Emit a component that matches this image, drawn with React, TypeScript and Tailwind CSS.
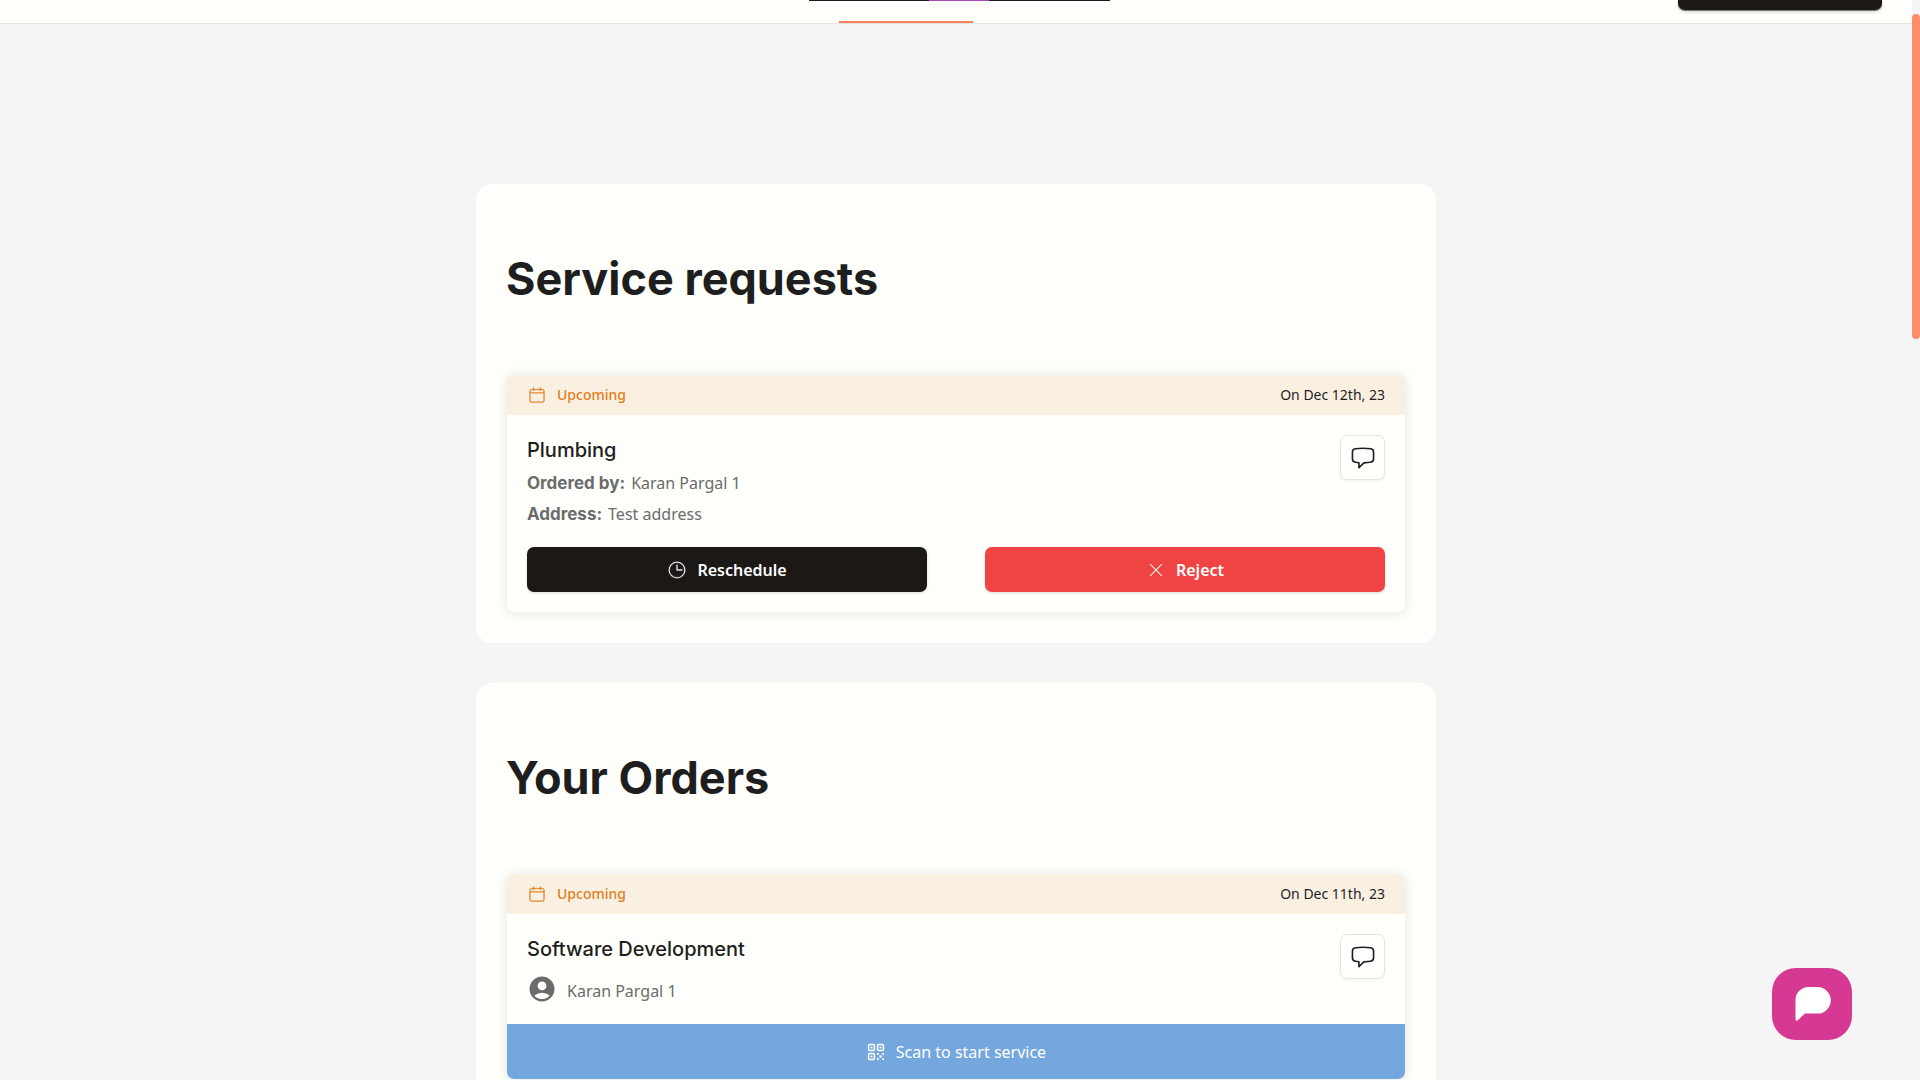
import type { ReactNode } from "react";
import { CiCalendar, CiClock2 } from "react-icons/ci";
import { HiOutlineChatBubbleLeft } from "react-icons/hi2";
import { MdAccountCircle } from "react-icons/md";
import { PiXLight } from "react-icons/pi";

function QrIcon() {
  return (
    <svg width="20" height="20" viewBox="0 0 20 20" fill="none" stroke="currentColor" aria-hidden="true">
      <g strokeWidth="1.5">
        <rect x="2.600" y="2.600" width="5.800" height="5.800" rx="1" />
        <rect x="11.600" y="2.600" width="5.800" height="5.800" rx="1" />
        <rect x="2.600" y="11.600" width="5.800" height="5.800" rx="1" />
      </g>
      <g fill="currentColor" stroke="none">
        <rect x="4.600" y="4.600" width="1.800" height="1.800" />
        <rect x="13.600" y="4.600" width="1.800" height="1.800" />
        <rect x="4.600" y="13.600" width="1.800" height="1.800" />
        <rect x="11" y="11" width="1.800" height="1.800" />
        <rect x="16.200" y="11" width="1.800" height="1.800" />
        <rect x="13.400" y="13.400" width="2.200" height="2.200" />
        <rect x="11" y="16.200" width="1.800" height="1.800" />
        <rect x="16.200" y="16.200" width="1.800" height="1.800" />
      </g>
    </svg>
  );
}

function TopBar() {
  return (
    <header className="grid h-6 grid-cols-[1fr_301px_1fr] border-b border-[#e4e4e2] bg-[#fffffb] pl-[7px]">
      <div />
      <nav aria-label="Main" className="flex flex-col justify-between">
        <div className="flex h-px bg-[#1e1e1e]">
          <span className="ml-[120px] w-[60px] bg-[#ab47bc]" />
        </div>
        <span className="ml-[30px] h-0.5 w-[134px] bg-[#fa7f5b]" />
      </nav>
      <div className="flex items-start justify-end pr-[30px]">
        <button
          type="button"
          aria-label="Account"
          className="h-[10px] w-[204px] rounded-b-[7px] bg-[#1c1815] shadow-[0_1px_1px_rgba(0,0,0,0.5),0_2px_4px_rgba(0,0,0,0.15)]"
        />
      </div>
    </header>
  );
}

function Section({ title, children }: { title: string; children: ReactNode }) {
  return (
    <section className="w-full max-w-[960px] rounded-2xl bg-[#fffffb] p-[30px]">
      <h1 className="pt-[31px] pb-[61px] font-['Inter',sans-serif] text-[45px] leading-[68px] font-bold text-[#1e1e1e]">
        {title}
      </h1>
      {children}
    </section>
  );
}

function OrderCard({ date, children }: { date: string; children: ReactNode }) {
  return (
    <article className="overflow-hidden rounded-lg border border-[#f3f3f1] bg-[#fffffb] shadow-[0_1px_12px_rgba(0,0,0,0.1)]">
      <div className="flex h-10 items-center justify-between bg-[#faf0e2] px-5 text-sm">
        <span className="flex items-center gap-[10px] font-medium text-[#e07f1b]">
          <CiCalendar size={20} strokeWidth={0.4} />
          Upcoming
        </span>
        <span className="text-[#1e1e1e]">{date}</span>
      </div>
      {children}
    </article>
  );
}

function ChatButton() {
  return (
    <button
      type="button"
      aria-label="Chat"
      className="flex size-[45px] shrink-0 items-center justify-center rounded-[7px] border border-[#e4e4e2] text-[#1e1e1e] shadow-[0_1px_3px_rgba(0,0,0,0.06)]"
    >
      <HiOutlineChatBubbleLeft size={26} />
    </button>
  );
}

function ServiceName({ children }: { children: ReactNode }) {
  return (
    <h2 className="font-['Inter',sans-serif] text-xl leading-[30px] font-medium text-[#1e1e1e]">{children}</h2>
  );
}

function Detail({ label, value }: { label: string; value: string }) {
  return (
    <p className="flex items-baseline gap-[6px] leading-[31px] text-[#6b6b6b]">
      <strong className="font-['Inter',sans-serif] text-[17px] font-bold">{label}</strong>
      <span>{value}</span>
    </p>
  );
}

export default function App() {
  return (
    <div className="flex h-screen overflow-hidden bg-[#f5f5f5] font-['Noto_Sans',sans-serif]">
      <div className="min-w-0 flex-1">
        <TopBar />
        <main className="flex flex-col items-center gap-10 pt-40">
          <Section title="Service requests">
            <OrderCard date="On Dec 12th, 23">
              <div className="p-5">
                <div className="flex items-start justify-between">
                  <div>
                    <ServiceName>Plumbing</ServiceName>
                    <div className="mt-[3px]">
                      <Detail label="Ordered by:" value="Karan Pargal 1" />
                      <Detail label="Address:" value="Test address" />
                    </div>
                  </div>
                  <ChatButton />
                </div>
                <div className="mt-[17px] grid grid-cols-2 gap-[58px] font-semibold text-white">
                  <button
                    type="button"
                    className="flex h-[45px] items-center justify-center gap-[10px] rounded-[7px] bg-[#1c1815] shadow-[0_1px_3px_rgba(0,0,0,0.15)]"
                  >
                    <CiClock2 size={20} strokeWidth={0.4} />
                    Reschedule
                  </button>
                  <button
                    type="button"
                    className="flex h-[45px] items-center justify-center gap-[10px] rounded-[7px] bg-[#f04444] shadow-[0_1px_3px_rgba(0,0,0,0.15)]"
                  >
                    <PiXLight size={20} />
                    Reject
                  </button>
                </div>
              </div>
            </OrderCard>
          </Section>

          <Section title="Your Orders">
            <OrderCard date="On Dec 11th, 23">
              <div className="flex items-start justify-between p-5">
                <div>
                  <ServiceName>Software Development</ServiceName>
                  <div className="mt-[10px] flex items-end gap-[10px] text-[#6b6b6b]">
                    <MdAccountCircle size={30} />
                    <span className="leading-[26px]">Karan Pargal 1</span>
                  </div>
                </div>
                <ChatButton />
              </div>
              <button
                type="button"
                className="flex h-[55px] w-full items-center justify-center gap-[10px] bg-[#74a7dd] text-white"
              >
                <QrIcon />
                Scan to start service
              </button>
            </OrderCard>
          </Section>
        </main>
      </div>

      <div aria-hidden="true" className="w-2 shrink-0 bg-[#f4f4f4] pt-[14px]">
        <div className="h-[325px] rounded-full bg-[#fc8d68]" />
      </div>

      <button
        type="button"
        aria-label="Open messages"
        className="fixed right-[68px] bottom-10 flex h-[72px] w-20 items-center justify-center rounded-3xl bg-[#d63993]"
      >
        <svg width="38" height="34" viewBox="-2 0 38 34" fill="#ffffff" aria-hidden="true">
          <path d="M13.500 0H22.500a13.300 13.300 0 0 1 0 26.600H9.800L2.800 33.200Q.5 34.500.5 32V13A13 13 0 0 1 13.500 0Z" />
        </svg>
      </button>
    </div>
  );
}
